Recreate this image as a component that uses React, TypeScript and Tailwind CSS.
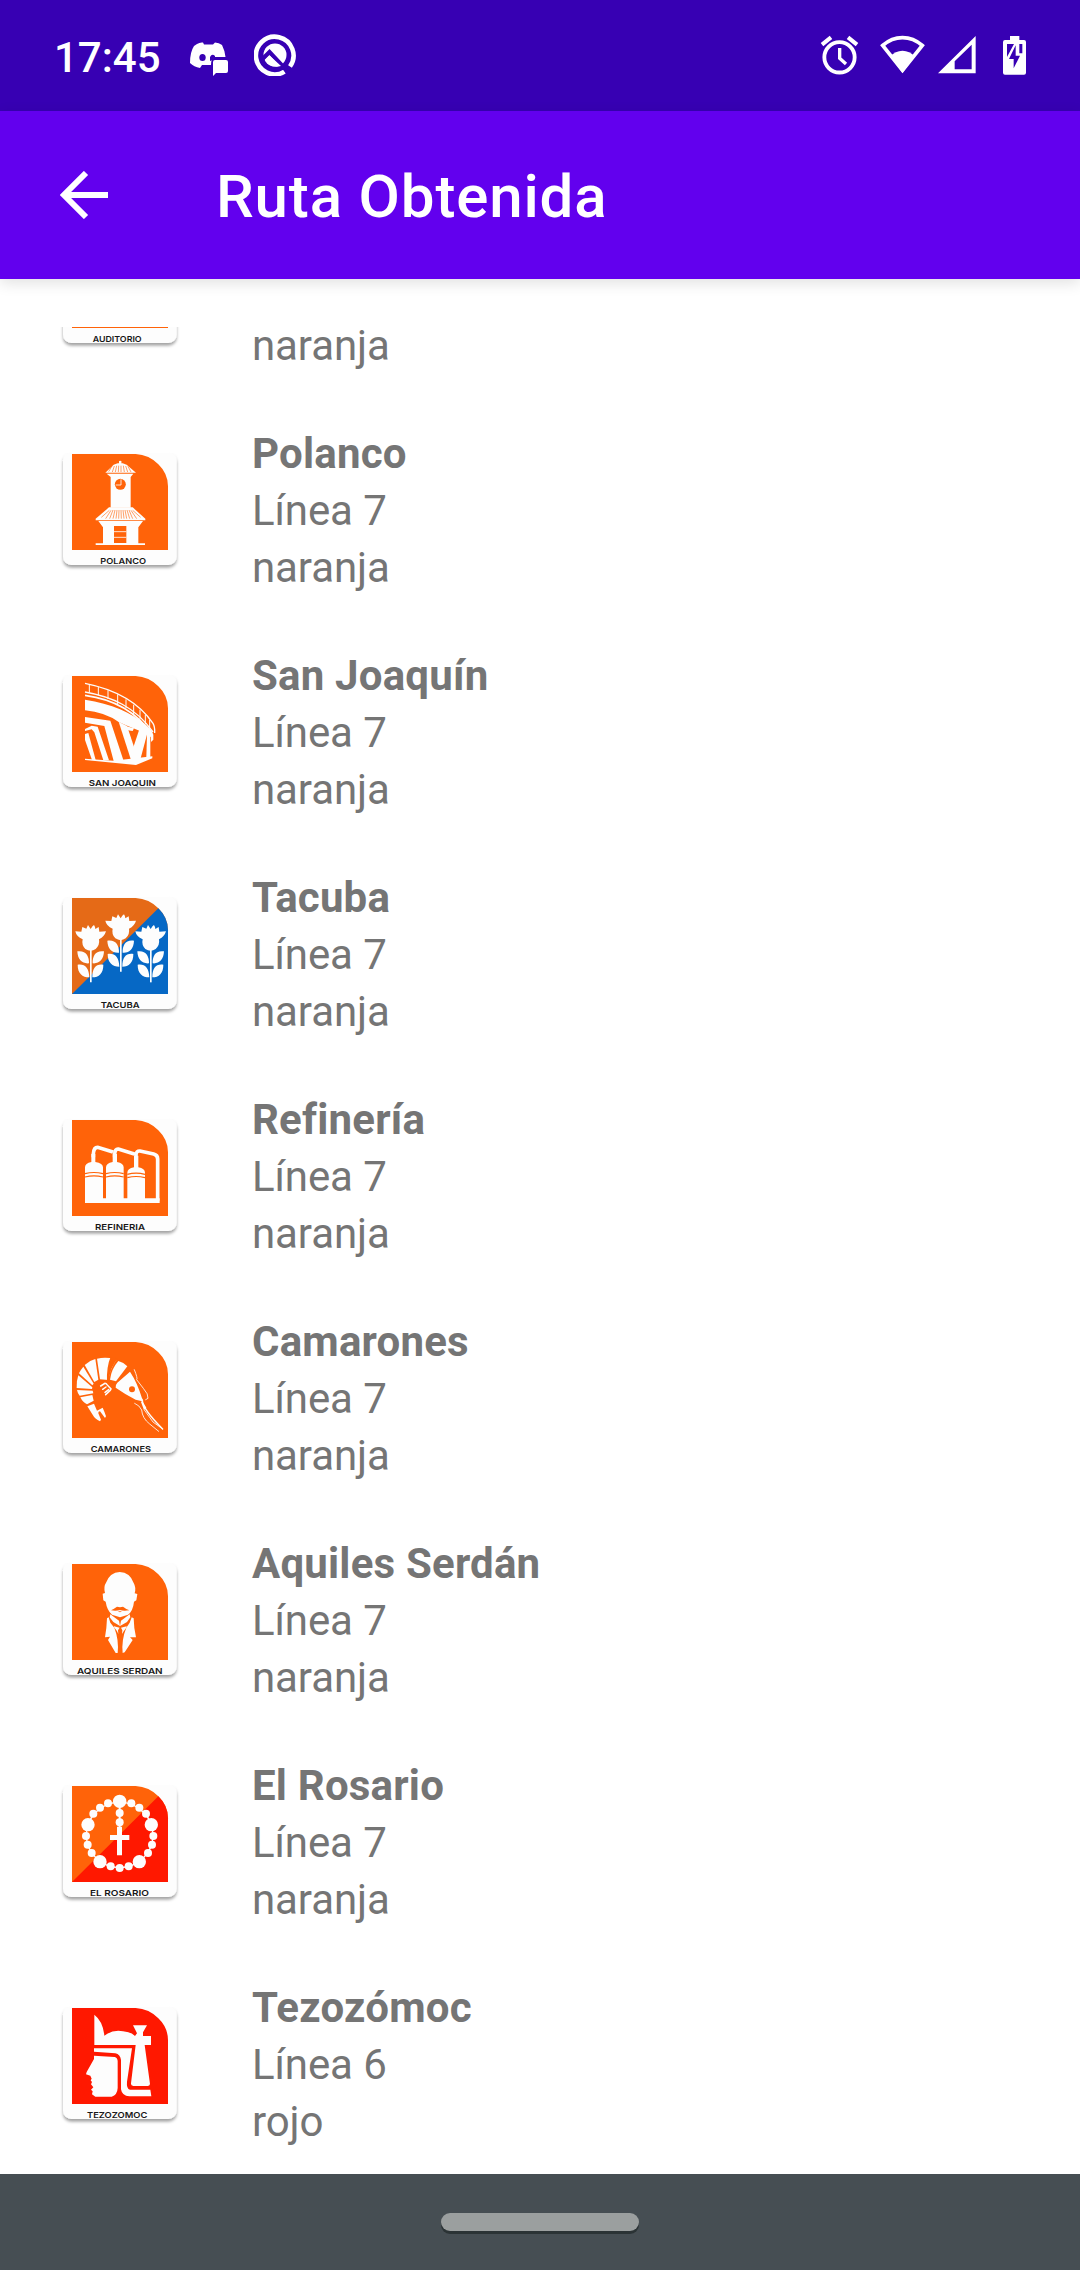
import type { ReactNode } from "react";

const ORANGE = "#ff6309";
const RED = "#ff1800";

type Station = {
  name: string;
  line: string;
  color: string;
  label: string;
  labelX: number;
  labelWidth: number;
  base: string;
  corner?: string;
  art?: ReactNode;
};

/* Clock tower */
const Tower = (
  <g fill="#fdfdfd">
    <path d="M207 70h7v8h-7zM203 76h15l12 4 28 24h-92l25-24z" />
    <circle cx="210.500" cy="72" r="3.500" />
    <path d="M170 107h80l-8 10v92h-60v-92z" />
    <path d="M177 208h71l38 34v5h-149v-5z" />
    <path d="M145 249h134l-14 19v48h20v5H137v-5h22v-48z" />
    <g stroke={ORANGE} strokeWidth="1.800" fill="none">
      <path d="M186 84l-10 17M193 84l-6 18M200 83l-4 19M206 83l-1 19M213 83v19M220 83l3 19M227 84l6 18M234 85l9 17" />
      <path d="M178 217l-24 21M183 217l-16 25M189 216l-10 26M195 216l-6 26M201 216l-3 26M207 216l-1 26M213 216l1 26M219 216l3 26M225 216l5 26M231 216l8 26M237 216l11 26M243 217l17 25M248 217l24 21" />
    </g>
    <circle cx="211" cy="139" r="16.500" fill={ORANGE} />
    <path d="M213 124v17h-16" stroke="#fdfdfd" strokeWidth="2.500" fill="none" />
    <path d="M192 264h37v51h-37z" fill={ORANGE} />
    <path d="M192 281h37M192 298h37" stroke="#fdfdfd" strokeWidth="2.500" />
  </g>
);

/* Elevated viaduct */
const Viaduct = (
  <g fill="#fdfdfd">
    <g fill="none" stroke="#fdfdfd" strokeWidth="4">
      <path d="M105 70C190 87 265 125 309 190Q315 200 314 219" />
      <path d="M105 96C185 110 255 140 309 216" />
      <path strokeWidth="3" d="M118 73v25M145 81v25M174 91v26M203 103v29M228 118v27M251 134v28M270 149v29M286 165v28M299 180v27" />
      <path strokeWidth="5" d="M105 106C180 116 255 148 306 224" />
    </g>
    <path d="M105 119C185 132 245 157 288 195Q305 209 310 224V239L303 246V232L290 221L228 196L206 186Q165 157 105 151z" />
    {/* Nested struts on the left */}
    <path d="M105 171L181 182L221 303H191L163 198L105 188z" />
    <path d="M105 207L125 197L143 200L177 301H160L133 217L125 208L105 213z" />
    <path d="M105 222L115 219L137 300H126L105 240z" />
    <path d="M105 296L190 302L307 289V295L258 315L105 300z" />
    {/* Right pillars */}
    <path d="M206 185L231 198L262 290L258 310L244 303z" />
    <path d="M268 208L292 220L270 302L254 306L250 262z" />
    <path d="M291 221H301V292H289z" />
    <path d="M226 198L252 205L248 213L233 211L242 234L236 240z" />
  </g>
);

const Flower = ({ x, y }: { x: number; y: number }) => (
  <g transform={`translate(${x} ${y})`} fill="#fdfdfd">
    <path d="M0-32Q6-42 10-44Q14-38 14-32L24-38L26-24L46-25Q42-10 25-1Q28 16 15 28Q0 39-16 28Q-28 16-24-1Q-43-9-46-25L-28-24L-25-38L-13-33L-8-44z" />
    <path d="M-2 30h5v98h-5z" />
    <path d="M-40 35C-15 31-4 49-5 71C-25 73-39 60-40 35zM40 35C15 31 5 49 6 71C25 73 39 60 40 35zM-39 75C-17 72-5 84-4 113C-25 113-39 101-39 75zM38 75C16 72 5 84 5 113C25 113 38 101 38 75z" />
  </g>
);

/* Three distillation columns with their pipes */
const Refinery = (
  <g>
    <g fill="#fdfdfd">
      <path d="M124 150H136V174Q159 178 159 190V290H105V190Q105 178 124 174z" />
      <path d="M188 150H201V174Q221 178 221 190V290H168V190Q168 178 188 174z" />
      <path d="M252 155H265V190Q285 194 285 206V290H232V206Q232 194 252 190z" />
      <path d="M105 283H329V297H105z" />
    </g>
    <path
      d="M130 160V150Q131 130 143 130L189 144M194 160V150Q195 134 205 135L253 150M258 162V152Q259 140 270 141L311 150Q323 153 323 165V290"
      fill="none" stroke="#fdfdfd" strokeWidth="11"
    />
    <path
      fill="none" stroke={ORANGE} strokeWidth="3.500"
      d="M105 209Q132 202 159 209M105 219Q132 212 159 219M168 209Q194 202 221 209M168 219Q194 212 221 219M232 211Q258 204 285 211M232 221Q258 214 285 221"
    />
  </g>
);

/* Shrimp */
const Shrimp = (
  <g fill="#fdfdfd">
    <path d="M205 105Q221 109 232 121L198 166L180 161Q184 129 205 105z" />
    <path d="M141 98Q160 93 180 96L200 101Q180 127 175 162L150 160z" />
    <path d="M182 92L204 98Q178 124 177 168L171 168Q169 122 182 92z" fill={ORANGE} />
    <path d="M104 117Q119 103 136 99L145 161L133 168z" />
    <path d="M87 142Q92 131 100 122L131 173L127 178z" />
    <path d="M80 186Q79 164 85 148L127 184L126 189z" />
    <path d="M81 192L128 194L130 202L89 209Q83 203 81 192z" />
    <path d="M91 214L127 207L131 224L111 235Q98 229 91 214z" />
    <path d="M240 137L202 170Q195 178 197 185Q227 206 257 221L277 226L289 245L282 252L273 228L280 223L276 217Q262 170 240 137z" />
    <circle cx="246" cy="190" r="9" fill={ORANGE} />
    <path d="M112 241L132 233L141 254L158 245Q164 258 168 271L165 276L150 256Q144 256 145 262L153 281L150 286Q135 280 127 265z" />
    <g fill="none" stroke="#fdfdfd" strokeLinecap="round">
      <path strokeWidth="4.500" d="M152 180L165 172Q169 172 171 176L183 189L181 193L167 206M168 183L158 190M176 191L165 199" />
      <path strokeWidth="2.500" d="M253 131Q264 158 260 161L280 187Q296 205 294 217L287 221M254 232Q269 238 275 252Q277 277 299 294L326 316" />
      <path strokeWidth="4" d="M277 224Q279 250 338 309" />
      <path strokeWidth="2.500" d="M283 252L309 288L338 309" />
    </g>
  </g>
);

/* Bust with moustache */
const Bust = (
  <g fill="#fdfdfd">
    <path d="M209 72Q240 73 251 105Q259 119 254 136L262 138L259 157L252 161Q249 189 234 200L210 208L186 200Q171 187 167 161L160 157L158 137L165 135Q160 116 168 104Q180 73 209 72z" />
    <path fill={ORANGE} d="M183 187Q191 183 201 176L210 178L219 176Q228 183 238 187Q220 190 210 186Q198 190 183 187zM203 190h13l-6 3z" />
    <path d="M181 199L207 218L210 234L190 222L179 208zM239 199L213 218L210 234L231 222L241 208z" />
    <path d="M176 208L171 211L169 240L165 268L180 266L174 276L197 315H203Q207 275 193 239L181 224zM245 208L251 211L253 240L258 268L240 268L248 276L224 313L218 315Q214 275 229 239L239 224z" />
    <path d="M192 235L209 239L204 247L205 258Q201 248 192 238zM230 235L213 239L217 247L216 258Q222 248 230 238z" />
  </g>
);

const beads: [number, number, number][] = [
  [209, 94, 20], [244, 100, 12], [268, 113, 12], [288, 131, 12], [304, 164, 20],
  [310, 198, 12], [306, 224, 12], [294, 249, 12], [268, 275, 20], [236, 289, 12],
  [209, 294, 12], [182, 289, 12], [150, 275, 20], [125, 249, 12], [113, 224, 12],
  [108, 198, 12], [114, 164, 20], [130, 131, 12], [150, 113, 12], [174, 100, 12],
  [209, 129, 12], [209, 157, 12],
];

/* Rosary */
const Rosary = (
  <g fill="#fdfdfd">
    <ellipse cx="209" cy="195" rx="100" ry="98" fill="none" stroke="#fdfdfd" strokeWidth="4" />
    {beads.map(([x, y, r]) => (
      <circle key={`${x}-${y}`} cx={x} cy={y} r={r} />
    ))}
    <path d="M206 110h6v60h-6zM201 170h15v25h22v15h-22v46h-15v-46h-21v-15h21z" />
  </g>
);

/* Profile with headdress */
const Headdress = (
  <g fill="#fdfdfd">
    <path d="M133 68Q159 88 163 131Q189 112 219 118Q244 120 255 132L261 124L249 100H291L279 121V132H303V159H284L300 276Q299 282 293 282H250Q242 281 243 274L257 159H133z" />
    <path d="M132 169H246L231 269Q229 291 240 293H301L304 313H238Q216 312 213 292V204Q211 187 196 184L132 179z" />
    <path d="M132 191L194 195Q202 197 203 207V288Q202 309 185 314H136L126 307L128 298L123 293L130 286L123 277L126 270L122 265L125 260L121 251L108 247L110 240L132 201z" />
  </g>
);

const stations: Station[] = [
  { name: "Polanco", line: "Línea 7", color: "naranja", label: "POLANCO", labelX: 151, labelWidth: 137, base: ORANGE, art: Tower },
  { name: "San Joaquín", line: "Línea 7", color: "naranja", label: "SAN JOAQUIN", labelX: 116, labelWidth: 202, base: ORANGE, art: Viaduct },
  {
    name: "Tacuba", line: "Línea 7", color: "naranja", label: "TACUBA", labelX: 152, labelWidth: 117, base: "#e56a17", corner: "#0668c5",
    art: (
      <>
        <Flower x={122} y={173} />
        <Flower x={212} y={141} />
        <Flower x={302} y={173} />
      </>
    ),
  },
  { name: "Refinería", line: "Línea 7", color: "naranja", label: "REFINERIA", labelX: 135, labelWidth: 150, base: ORANGE, art: Refinery },
  { name: "Camarones", line: "Línea 7", color: "naranja", label: "CAMARONES", labelX: 122, labelWidth: 181, base: ORANGE, art: Shrimp },
  { name: "Aquiles Serdán", line: "Línea 7", color: "naranja", label: "AQUILES SERDAN", labelX: 81, labelWidth: 257, base: ORANGE, art: Bust },
  { name: "El Rosario", line: "Línea 7", color: "naranja", label: "EL ROSARIO", labelX: 120, labelWidth: 177, base: ORANGE, corner: RED, art: Rosary },
  { name: "Tezozómoc", line: "Línea 6", color: "rojo", label: "TEZOZOMOC", labelX: 111, labelWidth: 181, base: RED, art: Headdress },
];

function StationIcon({ station }: { station: Pick<Station, "label" | "labelX" | "labelWidth" | "base" | "corner" | "art"> }) {
  const { label, labelX, labelWidth, base, corner, art } = station;
  return (
    <svg viewBox="0 0 420 420" className="h-[140px] w-[140px] shrink-0">
      <defs>
        <filter id="card-shadow" x="-10%" y="-10%" width="120%" height="125%">
          <feDropShadow dx="0" dy="8" stdDeviation="4" floodColor="#000" floodOpacity="0.36" />
        </filter>
      </defs>
      <rect x="39" y="42" width="341" height="339" rx="25" fill="#fdfdfd" filter="url(#card-shadow)" />
      <rect x="30" y="20" width="360" height="24" fill="#fff" />
      <path d="M66 48H257Q297 50 325 79Q354 107 354 145V336H66z" fill={base} />
      {corner && <path d="M66 336L325 79Q354 107 354 145V336z" fill={corner} />}
      {art}
      <text x={labelX} y="377.500" textLength={labelWidth} lengthAdjust="spacingAndGlyphs" fontSize="24" fontWeight="600" fill="#171717" className="font-['Inter',sans-serif]">
        {label}
      </text>
    </svg>
  );
}

function StationRow({ station }: { station: Station }) {
  return (
    <li className="flex h-[222px] pt-[25px] pl-[50px]">
      <div className="mt-[13px]">
        <StationIcon station={station} />
      </div>
      <div className="ml-[62px] text-[42px] leading-[57px] text-[#757575]">
        <p className="font-bold tracking-[0.2px]">{station.name}</p>
        <p className="tracking-[-0.1px]">{station.line}</p>
        <p className="tracking-[-0.1px]">{station.color}</p>
      </div>
    </li>
  );
}

/* The row scrolled halfway past the top of the list */
function ScrolledRow() {
  return (
    <li className="flex h-[73px] items-start overflow-hidden pl-[50px]">
      <div className="mt-[-111px]">
        <StationIcon station={{ label: "AUDITORIO", labelX: 128, labelWidth: 147, base: ORANGE }} />
      </div>
      <p className="mt-[-10px] ml-[62px] text-[42px] leading-[57px] tracking-[-0.1px] text-[#757575]">naranja</p>
    </li>
  );
}

function StatusBar() {
  return (
    <div className="flex h-[111px] bg-[#3700b3] pr-[53px] pl-[54px] text-white">
      <span className="mt-[33px] w-[136px] text-[42px] leading-[50px] font-medium">17:45</span>
      <svg viewBox="0 0 38 34" className="mt-[42px] h-[34px] w-[38px]" fill="#fff">
        <path d="M7 2Q10 0 13 .5L14 2.500H23L25 .5Q29 .5 32 3Q35 9 35.500 15H25Q21 16 21 23H12L10 26Q4 25 0 21Q0 10 4 4z" />
        <ellipse cx="12.500" cy="15.500" rx="3.200" ry="3.500" fill="#3700b3" />
        <path d="M20 15Q22 11 25 14V16H23V18L20 19z" fill="#3700b3" />
        <path d="M25 18H36Q38 18 38 20V29Q38 31 36 31H26L23 34V20Q23 18 25 18z" />
      </svg>
      <svg viewBox="0 0 42 42" className="mt-[34px] ml-[26px] h-[42px] w-[42px]" fill="none">
        <path d="M30.500 37.600A18.800 18.800 0 1 1 36 32.500" stroke="#fff" strokeWidth="4.600" />
        <circle cx="21" cy="21" r="11.500" fill="#fff" />
        <path d="M8 25.500L15.500 18L35 39" stroke="#3700b3" strokeWidth="4.200" />
        <path d="M11 26L15.500 21.500L27 32Q17 35 11 26z" fill="#fff" />
      </svg>
      <div className="flex-1" />
      <svg viewBox="120 105 117 120" className="mt-[35px] h-[40px] w-[39px]" fill="none" stroke="#fff">
        <circle cx="178.500" cy="172" r="45.500" strokeWidth="11.500" />
        <path d="M179 144v31l19 17" strokeWidth="10" />
        <path d="M126 134l27-22M231 134l-27-22" strokeWidth="12" />
      </svg>
      <svg viewBox="300 105 135 120" className="mt-[35px] ml-[21px] h-[40px] w-[45px]">
        <path d="M367.500 211L308 136.500Q335 113 367.500 113T427 136.500z" fill="none" stroke="#fff" strokeWidth="11" />
        <path d="M367.500 219L331 169Q346 153 367.500 152Q389 153 404 169z" fill="#fff" />
      </svg>
      <svg viewBox="474 105 114 120" className="mt-[35px] ml-[13px] h-[40px] w-[38px]">
        <path fillRule="evenodd" fill="#fff" d="M474 220L587 108V220zM524 184V208H575V134z" />
      </svg>
      <svg viewBox="666 105 75 120" className="mt-[35px] ml-[26px] h-[40px] w-[25px]">
        <path d="M690 108h28v12h14q6 0 6 6v92q0 6-6 6h-57q-6 0-6-6v-92q0-6 6-6h15z" fill="#fff" />
        <path d="M681 132H702L681 171zM718 132H727V160H718zM707 136L687 177H701V205L720 167H707z" fill="#3700b3" />
      </svg>
    </div>
  );
}

export default function App() {
  return (
    <div className="flex h-[2270px] w-[1080px] flex-col overflow-hidden bg-white font-['Roboto',sans-serif]">
      <StatusBar />
      <header className="flex h-[168px] items-center bg-[#6200ee] pl-[60px] text-white shadow-[0_4px_14px_rgba(0,0,0,0.12)]">
        <svg viewBox="0 0 48 48" className="h-[48px] w-[48px]" fill="none" stroke="#fff" strokeWidth="6">
          <path d="M48 24H5M26 2L4 24L26 46" />
        </svg>
        <h1 className="ml-[108px] pt-[4px] text-[60px] leading-[70px] font-medium tracking-[0.85px]">Ruta Obtenida</h1>
      </header>
      <main className="mt-[48px] h-[1847px] overflow-hidden">
        <ul>
          <ScrolledRow />
          {stations.map((station) => (
            <StationRow key={station.name} station={station} />
          ))}
        </ul>
      </main>
      <footer className="flex h-[96px] shrink-0 justify-center bg-[#464e53]">
        <div className="mt-[39px] h-[18px] w-[198px] rounded-full bg-[#9b9f9f] shadow-[0_3px_0_#2b3335]" />
      </footer>
    </div>
  );
}
